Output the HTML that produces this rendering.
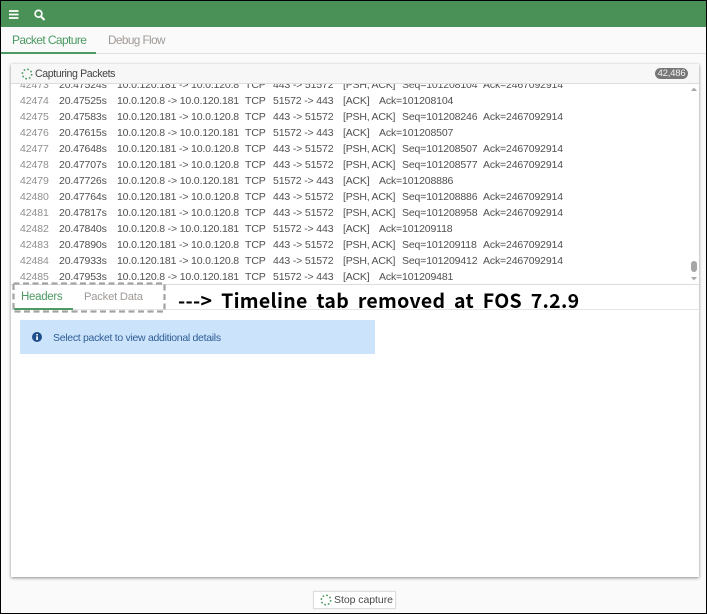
<!DOCTYPE html>
<html><head><meta charset="utf-8">
<style>
html,body{margin:0;padding:0}
body{width:707px;height:614px;position:relative;overflow:hidden;background:#fafafa;font-family:"Liberation Sans",sans-serif;color:#555}
.a{position:absolute;white-space:nowrap}
.b{filter:blur(.25px)}
#frame{position:absolute;left:0;top:0;width:705px;height:612px;border:1px solid #000;z-index:20;pointer-events:none}
#list{position:absolute;left:11px;top:84px;width:688px;height:200px;overflow:hidden;background:#fff;filter:blur(.25px)}
.r{position:absolute;left:0;height:16px;width:688px;font-size:10.5px;line-height:16px;color:#505050}
.r span{position:absolute;top:1px;white-space:nowrap}
.n{left:9px;color:#909090;letter-spacing:-.1px}
.t{left:48px;letter-spacing:-.15px}
.i{left:106px;letter-spacing:-.17px}
.p{left:234px;letter-spacing:-.1px}
.o{left:262px;letter-spacing:-.15px}
.f{left:332px;letter-spacing:-.2px}
.s{left:391px;letter-spacing:-.15px}
.k{left:368px;letter-spacing:-.15px}
.c{left:472px;letter-spacing:-.15px}
</style></head><body>
<div id="frame"></div>

<div class="a" style="left:1px;top:1px;width:705px;height:26px;background:#4a9157"></div>
<svg class="a" style="left:9px;top:9px" width="40" height="12" viewBox="0 0 40 12">
<path d="M0 2H9.500M0 5.500H9.500M0 9H9.500" stroke="#fff" stroke-width="1.700" fill="none"/>
<circle cx="29.500" cy="4.800" r="3.400" stroke="#fff" stroke-width="1.700" fill="none"/>
<path d="M32 7.500L35.500 11" stroke="#fff" stroke-width="2" fill="none"/>
</svg>

<div class="a" style="left:1px;top:27px;width:705px;height:26px;background:#fafafa;border-bottom:1px solid #e2e2e2"></div>
<div class="a b" style="left:12px;top:32px;font-size:12px;line-height:16px;color:#4a9a62;letter-spacing:-.6px">Packet Capture</div>
<div class="a b" style="left:108px;top:32px;font-size:11.800px;line-height:16px;color:#a09a96;letter-spacing:-.6px">Debug Flow</div>
<div class="a" style="left:1px;top:52px;width:95px;height:2px;background:#4a9a62"></div>

<div class="a" style="left:11px;top:64px;width:688px;height:513px;background:#fff;box-shadow:0 1px 3px rgba(0,0,0,.45)"></div>
<div class="a" style="left:11px;top:64px;width:688px;height:19px;background:#f7f7f7;border-bottom:1px solid #dcdcdc"></div>
<svg class="a" style="left:21px;top:68px" width="12" height="12" viewBox="0 0 12 12">
<circle cx="6" cy="6" r="4.700" fill="none" stroke="#4a9a62" stroke-width="1.500" stroke-dasharray="1.700 2"/>
</svg>
<div class="a b" style="left:35px;top:66px;font-size:10.600px;line-height:16px;color:#444;letter-spacing:-.38px">Capturing Packets</div>
<div class="a b" style="left:655px;top:68px;width:33px;height:11px;border-radius:6px;background:#777;color:#f2f2f2;font-size:9.500px;line-height:11px;text-align:center;letter-spacing:-.2px">42,486</div>

<div id="list">
<div class="r" style="top:-8px"><span class="n">42473</span><span class="t">20.47524s</span><span class="i">10.0.120.181 -&gt; 10.0.120.8</span><span class="p">TCP</span><span class="o">443 -&gt; 51572</span><span class="f">[PSH, ACK]</span><span class="s">Seq=101208104</span><span class="c">Ack=2467092914</span></div>
<div class="r" style="top:8px"><span class="n">42474</span><span class="t">20.47525s</span><span class="i">10.0.120.8 -&gt; 10.0.120.181</span><span class="p">TCP</span><span class="o">51572 -&gt; 443</span><span class="f">[ACK]</span><span class="k">Ack=101208104</span></div>
<div class="r" style="top:24px"><span class="n">42475</span><span class="t">20.47583s</span><span class="i">10.0.120.181 -&gt; 10.0.120.8</span><span class="p">TCP</span><span class="o">443 -&gt; 51572</span><span class="f">[PSH, ACK]</span><span class="s">Seq=101208246</span><span class="c">Ack=2467092914</span></div>
<div class="r" style="top:40px"><span class="n">42476</span><span class="t">20.47615s</span><span class="i">10.0.120.8 -&gt; 10.0.120.181</span><span class="p">TCP</span><span class="o">51572 -&gt; 443</span><span class="f">[ACK]</span><span class="k">Ack=101208507</span></div>
<div class="r" style="top:56px"><span class="n">42477</span><span class="t">20.47648s</span><span class="i">10.0.120.181 -&gt; 10.0.120.8</span><span class="p">TCP</span><span class="o">443 -&gt; 51572</span><span class="f">[PSH, ACK]</span><span class="s">Seq=101208507</span><span class="c">Ack=2467092914</span></div>
<div class="r" style="top:72px"><span class="n">42478</span><span class="t">20.47707s</span><span class="i">10.0.120.181 -&gt; 10.0.120.8</span><span class="p">TCP</span><span class="o">443 -&gt; 51572</span><span class="f">[PSH, ACK]</span><span class="s">Seq=101208577</span><span class="c">Ack=2467092914</span></div>
<div class="r" style="top:88px"><span class="n">42479</span><span class="t">20.47726s</span><span class="i">10.0.120.8 -&gt; 10.0.120.181</span><span class="p">TCP</span><span class="o">51572 -&gt; 443</span><span class="f">[ACK]</span><span class="k">Ack=101208886</span></div>
<div class="r" style="top:104px"><span class="n">42480</span><span class="t">20.47764s</span><span class="i">10.0.120.181 -&gt; 10.0.120.8</span><span class="p">TCP</span><span class="o">443 -&gt; 51572</span><span class="f">[PSH, ACK]</span><span class="s">Seq=101208886</span><span class="c">Ack=2467092914</span></div>
<div class="r" style="top:120px"><span class="n">42481</span><span class="t">20.47817s</span><span class="i">10.0.120.181 -&gt; 10.0.120.8</span><span class="p">TCP</span><span class="o">443 -&gt; 51572</span><span class="f">[PSH, ACK]</span><span class="s">Seq=101208958</span><span class="c">Ack=2467092914</span></div>
<div class="r" style="top:136px"><span class="n">42482</span><span class="t">20.47840s</span><span class="i">10.0.120.8 -&gt; 10.0.120.181</span><span class="p">TCP</span><span class="o">51572 -&gt; 443</span><span class="f">[ACK]</span><span class="k">Ack=101209118</span></div>
<div class="r" style="top:152px"><span class="n">42483</span><span class="t">20.47890s</span><span class="i">10.0.120.181 -&gt; 10.0.120.8</span><span class="p">TCP</span><span class="o">443 -&gt; 51572</span><span class="f">[PSH, ACK]</span><span class="s">Seq=101209118</span><span class="c">Ack=2467092914</span></div>
<div class="r" style="top:168px"><span class="n">42484</span><span class="t">20.47933s</span><span class="i">10.0.120.181 -&gt; 10.0.120.8</span><span class="p">TCP</span><span class="o">443 -&gt; 51572</span><span class="f">[PSH, ACK]</span><span class="s">Seq=101209412</span><span class="c">Ack=2467092914</span></div>
<div class="r" style="top:184px"><span class="n">42485</span><span class="t">20.47953s</span><span class="i">10.0.120.8 -&gt; 10.0.120.181</span><span class="p">TCP</span><span class="o">51572 -&gt; 443</span><span class="f">[ACK]</span><span class="k">Ack=101209481</span></div>
</div>

<svg class="a" style="left:689px;top:84px" width="10" height="200" viewBox="0 0 10 200">
<path d="M2 7L5 3.500L8 7Z" fill="#a8a8a8"/>
<rect x="2" y="177" width="6" height="11" rx="3" fill="#a6a6a6"/>
<path d="M2 193L5 196.500L8 193Z" fill="#a8a8a8"/>
</svg>

<div class="a" style="left:11px;top:284px;width:688px;height:1px;background:#dcdcdc"></div>
<div class="a" style="left:11px;top:309px;width:688px;height:1px;background:#e4e4e4"></div>
<div class="a b" style="left:21px;top:289px;font-size:11.500px;line-height:16px;color:#4a9a62;letter-spacing:-.3px">Headers</div>
<div class="a b" style="left:84px;top:289px;font-size:11.200px;line-height:16px;color:#a09a96;letter-spacing:-.2px">Packet Data</div>
<div class="a" style="left:14px;top:308px;width:59px;height:2px;background:#4a9a62"></div>
<svg class="a" style="left:11px;top:281px" width="157" height="34" viewBox="0 0 157 34">
<rect x="2.500" y="2.500" width="151" height="28" fill="none" stroke="#a3a3a3" stroke-width="2.200" stroke-dasharray="6 3.500"/>
</svg>
<div class="a" style="left:178px;top:287px;width:410px;font-family:'Noto Sans CJK KR','Liberation Sans',sans-serif;font-weight:700;font-size:19.500px;line-height:26px;color:#000;letter-spacing:.3px;word-spacing:4px">---&gt; Timeline tab removed at FOS 7.2.9</div>

<div class="a" style="left:20px;top:320px;width:355px;height:34px;background:#cce4fb"></div>
<svg class="a" style="left:32px;top:332px" width="10" height="10" viewBox="0 0 10 10">
<circle cx="5" cy="5" r="5" fill="#1f4e8c"/><rect x="4.200" y="4.300" width="1.700" height="3.700" fill="#fff"/><rect x="4.200" y="2" width="1.700" height="1.500" fill="#fff"/>
</svg>
<div class="a b" style="left:53px;top:330px;font-size:10.500px;line-height:16px;color:#2e5c96;letter-spacing:-.3px">Select packet to view additional details</div>

<div class="a" style="left:313px;top:591px;width:81px;height:16px;background:#fff;border:1px solid #dedede;box-shadow:0 0 1px #ddd"></div>
<svg class="a" style="left:320px;top:594px" width="12" height="12" viewBox="0 0 12 12">
<circle cx="6" cy="6" r="4.700" fill="none" stroke="#4a9a62" stroke-width="1.500" stroke-dasharray="1.700 2"/>
</svg>
<div class="a b" style="left:334px;top:592px;font-size:10.500px;line-height:16px;color:#4a4a4a;letter-spacing:-.05px">Stop capture</div>
</body></html>
